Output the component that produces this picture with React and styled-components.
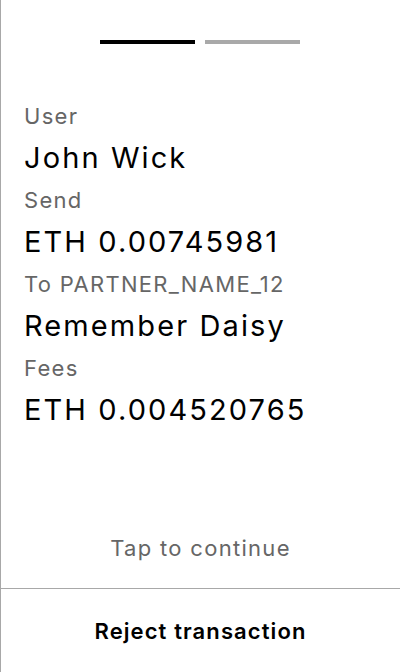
import React from 'react';
import styled, { createGlobalStyle } from 'styled-components';

const DETAILS = [
  { label: 'User', value: 'John Wick' },
  { label: 'Send', value: 'ETH 0.00745981' },
  { label: 'To PARTNER_NAME_12', value: 'Remember Daisy' },
  { label: 'Fees', value: 'ETH 0.004520765' },
];

const GlobalStyle = createGlobalStyle`
  html, body {
    margin: 0;
    padding: 0;
    background: #ffffff;
  }

  body {
    font-family: Inter, 'Noto Sans', sans-serif;
    -webkit-font-smoothing: antialiased;
  }
`;

const App = () => {
  return (
    <Screen>
      <GlobalStyle />
      <Steps>
        <Step active />
        <Step />
      </Steps>
      <Details>
        {DETAILS.map(({ label, value }) => (
          <React.Fragment key={label}>
            <Label>{label}</Label>
            <Value>{value}</Value>
          </React.Fragment>
        ))}
      </Details>
      <Hint>Tap to continue</Hint>
      <Footer>
        <RejectBtn type="button">Reject transaction</RejectBtn>
      </Footer>
    </Screen>
  );
};

export default App;

const Screen = styled.div`
  display: flex;
  flex-direction: column;
  box-sizing: border-box;
  width: 400px;
  height: 672px;
  border-left: 1px solid #a8a8a8;
  background: #ffffff;
`;

const Steps = styled.div`
  display: flex;
  justify-content: center;
  gap: 10px;
  padding-top: 40px;
  margin-left: -1px;
`;

const Step = styled.div`
  width: 95px;
  height: 4px;
  background-color: ${({ active }) => (active ? '#000000' : '#a9a9a9')};
`;

const Details = styled.div`
  display: flex;
  flex-direction: column;
  flex: 1;
  padding: 0 23px;
  margin-top: 51px;
`;

const Label = styled.div`
  height: 42px;
  line-height: 42px;
  font-size: 22px;
  letter-spacing: 1.3px;
  color: #666666;
  white-space: nowrap;
`;

const Value = styled.div`
  height: 42px;
  line-height: 42px;
  font-size: 29px;
  letter-spacing: 2.1px;
  color: #000000;
  white-space: nowrap;
`;

const Hint = styled.div`
  text-align: center;
  font-size: 22px;
  letter-spacing: 1.3px;
  line-height: 24px;
  color: #666666;
  margin-bottom: 28px;
`;

const Footer = styled.div`
  display: flex;
  justify-content: center;
  align-items: center;
  height: 83px;
  border-top: 1px solid #a8a8a8;
`;

const RejectBtn = styled.button`
  border: none;
  background: none;
  padding: 0;
  font-family: Inter, 'Noto Sans', sans-serif;
  font-size: 22px;
  font-weight: 600;
  letter-spacing: 1.1px;
  color: #000000;
  cursor: pointer;
`;
